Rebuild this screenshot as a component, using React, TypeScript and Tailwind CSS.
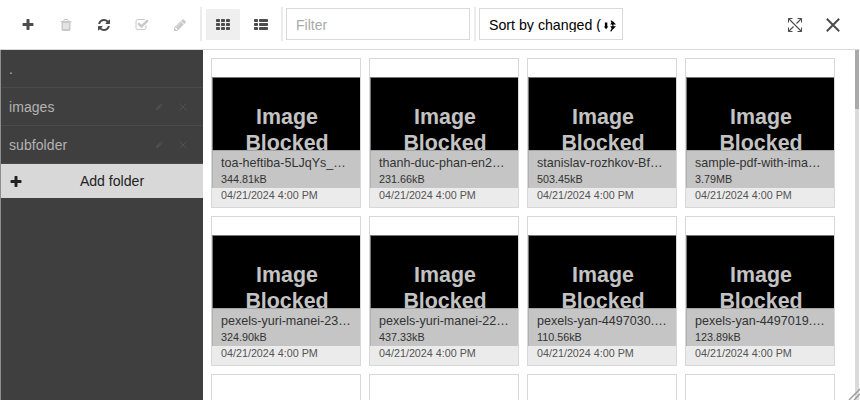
import React from 'react';

const PLUS =
  'M1600 736v192q0 40-28 68t-68 28h-416v416q0 40-28 68t-68 28h-192q-40 0-68-28t-28-68v-416h-416q-40 0-68-28t-28-68v-192q0-40 28-68t68-28h416v-416q0-40 28-68t68-28h192q40 0 68 28t28 68v416h416q40 0 68 28t28 68z';
const BIN =
  'M704 1376v-704q0-14-9-23t-23-9h-64q-14 0-23 9t-9 23v704q0 14 9 23t23 9h64q14 0 23-9t9-23zm256 0v-704q0-14-9-23t-23-9h-64q-14 0-23 9t-9 23v704q0 14 9 23t23 9h64q14 0 23-9t9-23zm256 0v-704q0-14-9-23t-23-9h-64q-14 0-23 9t-9 23v704q0 14 9 23t23 9h64q14 0 23-9t9-23zm-544-992h448l-48-117q-7-9-17-11h-317q-10 2-17 11zm928 32v64q0 14-9 23t-23 9h-96v948q0 83-47 143.5t-113 60.5h-832q-66 0-113-58.5t-47-141.5v-952h-96q-14 0-23-9t-9-23v-64q0-14 9-23t23-9h309l70-167q15-37 54-63t79-26h320q40 0 79 26t54 63l70 167h309q14 0 23 9t9 23z';
const REFRESH =
  'M1639 1056q0 5-1 7-64 268-268 434.5t-478 166.5q-146 0-282.5-55t-243.5-157l-129 129q-19 19-45 19t-45-19-19-45v-448q0-26 19-45t45-19h448q26 0 45 19t19 45-19 45l-137 137q71 66 161 102t187 36q134 0 250-65t186-179q11-17 53-117 8-23 30-23h192q13 0 22.5 9.5t9.5 22.5zm25-800v448q0 26-19 45t-45 19h-448q-26 0-45-19t-19-45 19-45l138-138q-148-137-349-137-134 0-250 65t-186 179q-11 17-53 117-8 23-30 23h-199q-13 0-22.5-9.5t-9.5-22.5v-7q65-268 270-434.5t480-166.5q146 0 284 55.5t245 156.5l130-129q19-19 45-19t45 19 19 45z';
const CHECK =
  'M1472 930v318q0 119-84.5 203.5t-203.5 84.5h-832q-119 0-203.5-84.5t-84.5-203.5v-832q0-119 84.5-203.5t203.5-84.5h832q63 0 117 25 15 7 18 23 3 17-9 29l-49 49q-10 10-23 10-3 0-9-2-23-6-45-6h-832q-66 0-113 47t-47 113v832q0 66 47 113t113 47h832q66 0 113-47t47-113v-254q0-13 9-22l64-64q10-10 23-10 6 0 12 3 20 8 20 29zm231-489l-814 814q-24 24-57 24t-57-24l-430-430q-24-24-24-57t24-57l110-110q24-24 57-24t57 24l263 263 647-647q24-24 57-24t57 24l110 110q24 24 24 57t-24 57z';
const PENCIL =
  'M491 1536l91-91-235-235-91 91v107h128v128h107zm523-928q0-22-22-22-10 0-17 7l-542 542q-7 7-7 17 0 22 22 22 10 0 17-7l542-542q7-7 7-17zm-54-192l416 416-832 832h-416v-416zm683 96q0 53-37 90l-166 166-416-416 166-165q36-38 90-38 53 0 91 38l235 234q37 39 37 91z';

function Glyph({ d, className = 'size-3.5' }: { d: string; className?: string }) {
  return (
    <svg viewBox="0 0 1792 1792" className={className} fill="currentColor">
      <path d={d} />
    </svg>
  );
}

function ToolButton({
  children,
  disabled = false,
  active = false,
  label,
}: {
  children: React.ReactNode;
  disabled?: boolean;
  active?: boolean;
  label: string;
}) {
  return (
    <button
      aria-label={label}
      className={`mt-px flex h-[31px] w-[34px] shrink-0 items-center justify-center rounded-[1px] pt-px ${
        disabled ? 'text-[#c9c9c9]' : 'text-[#4c4c4c]'
      } ${active ? 'bg-[#efefef]' : ''}`}
    >
      {children}
    </button>
  );
}

function Separator({ className }: { className: string }) {
  return <div className={`h-[34px] w-0.5 shrink-0 bg-[#ececec] ${className}`} />;
}

function TilesIcon({ list = false }: { list?: boolean }) {
  return (
    <svg width="14" height="12" viewBox="0 0 14 12" fill="currentColor">
      {[0, 4, 8].map((y) => (
        <g key={y}>
          <rect x="0" y={y} width="4" height="3" rx="0.8" />
          {list ? (
            <rect x="5" y={y} width="9" height="3" rx="0.8" />
          ) : (
            <>
              <rect x="5" y={y} width="4" height="3" rx="0.8" />
              <rect x="10" y={y} width="4" height="3" rx="0.8" />
            </>
          )}
        </g>
      ))}
    </svg>
  );
}

function Toolbar() {
  return (
    <header className="flex h-[50px] shrink-0 items-center border-b border-[#dadada] pb-px pl-[11px]">
      <div className="flex gap-1">
        <ToolButton label="Upload"><Glyph d={PLUS} /></ToolButton>
        <ToolButton label="Delete" disabled><Glyph d={BIN} /></ToolButton>
        <ToolButton label="Refresh"><Glyph d={REFRESH} /></ToolButton>
        <ToolButton label="Select" disabled><Glyph d={CHECK} /></ToolButton>
        <ToolButton label="Edit" disabled><Glyph d={PENCIL} /></ToolButton>
      </div>
      <Separator className="ml-[3px]" />
      <div className="ml-1 flex gap-1">
        <ToolButton label="Tiles" active><TilesIcon /></ToolButton>
        <ToolButton label="List"><TilesIcon list /></ToolButton>
      </div>
      <Separator className="ml-[3px]" />
      <input
        placeholder="Filter"
        className="ml-[3px] h-8 w-[184px] border border-[#dadada] px-[9px] pt-0.5 text-[14px] outline-none placeholder:text-[#a9a9a9]"
      />
      <Separator className="ml-1" />
      <div className="ml-[3px] flex h-8 w-36 items-center overflow-hidden border border-[#dadada] pl-[9px] text-[14.2px] text-black">
        <span className="h-4 shrink-0 overflow-hidden leading-[18px] whitespace-pre">Sort by changed (</span>
        <svg width="16" height="12" viewBox="0 0 16 12" className="mt-[3px] ml-0.5 shrink-0" fill="currentColor">
          <path d="M1.9 2.5h2.4v4h1L3.1 9.3.9 6.5h1z" />
          <path d="M7.2 4.6 9.7 1l3.3 3.6zM7.2 6.2H13l-3.4 3.6z" />
          <path d="M8 .6q4.2 5-.3 10.8" fill="none" stroke="currentColor" strokeWidth="1.2" />
        </svg>
      </div>
      <div className="ml-auto flex gap-1 pr-[10px]">
        <ToolButton label="Full size">
          <svg width="14" height="14" viewBox="0 0 14 14" fill="none" stroke="currentColor">
            <path d="M.5 4.5v-4h4M9.5.5h4v4M13.5 9.5v4h-4M4.5 13.5h-4v-4" />
            <path d="M.5.5l13 13M13.5.5l-5 5M5.5 8.5l-5 5" strokeWidth="1.2" />
          </svg>
        </ToolButton>
        <ToolButton label="Close">
          <svg width="14" height="14" viewBox="0 0 14 14" fill="none" stroke="currentColor" strokeWidth="2">
            <path d="M.8.8l12.4 12.4M13.2.8.8 13.2" />
          </svg>
        </ToolButton>
      </div>
    </header>
  );
}

function Folder({ name, editable = true }: { name: string; editable?: boolean }) {
  return (
    <div className="flex h-[38px] items-center border-b border-[#4b4b4b] pt-px pr-4 pl-2 text-[14px] tracking-[0.07px] text-[#b3b3b3]">
      <span className="flex-1">{name}</span>
      {editable && (
        <div className="flex items-center gap-4 text-[#4f4f4f]">
          <svg width="8" height="8" viewBox="0 0 8 8" fill="currentColor">
            <path d="M1 7V5.2L4.6 1.6 6.4 3.4 2.8 7zM5 1.2l1-.9 1.7 1.7-.9 1z" />
          </svg>
          <svg width="8" height="8" viewBox="0 0 8 8" fill="none" stroke="currentColor">
            <path d="M.3.3l7.4 7.4M7.7.3.3 7.7" />
          </svg>
        </div>
      )}
    </div>
  );
}

function Sidebar() {
  return (
    <aside className="w-[203px] shrink-0 border-l border-[#8d8d8d] bg-[#3f3f3f]">
      <Folder name="." editable={false} />
      <Folder name="images" />
      <Folder name="subfolder" />
      <button className="flex h-[34px] w-full items-center bg-[#d8d8d8] pl-2 text-[14.1px] text-[#222]">
        <Glyph d={PLUS} className="mt-px size-3.5" />
        <span className="flex-1 pt-px pr-0.5">Add folder</span>
      </button>
    </aside>
  );
}

const FILES = [
  ['toa-heftiba-5LJqYs_…', '344.81kB'],
  ['thanh-duc-phan-en2…', '231.66kB'],
  ['stanislav-rozhkov-Bf…', '503.45kB'],
  ['sample-pdf-with-ima…', '3.79MB'],
  ['pexels-yuri-manei-23…', '324.90kB'],
  ['pexels-yuri-manei-22…', '437.33kB'],
  ['pexels-yan-4497030.…', '110.56kB'],
  ['pexels-yan-4497019.…', '123.89kB'],
];

function FileCard({ name, size }: { name: string; size: string }) {
  return (
    <div className="flex h-[150px] flex-col border border-[#d8d8d8]">
      <div className="mt-[18px] h-[73px] shrink-0 overflow-hidden border-t border-l border-t-[#777] border-l-[#777] bg-black pt-[26px] pl-px text-center text-[21.4px] leading-[26px] font-bold text-[#c3c3c3]">
        Image
        <br />
        Blocked
      </div>
      <div className="h-[38px] border-t border-l border-t-[#a5a5a5] border-l-[#b0b0b0] bg-[#c5c5c5] pl-2 text-[#333]">
        <div className="pt-[5px] text-[12.55px] leading-[15px] whitespace-nowrap">{name}</div>
        <div className="pt-0.5 text-[10.8px] leading-3">{size}</div>
      </div>
      <div className="flex-1 bg-[#ebebeb] pt-px pl-[9px] text-[10.75px] leading-3 text-[#555]">04/21/2024 4:00 PM</div>
    </div>
  );
}

export default function App() {
  return (
    <div className="relative flex h-[400px] w-[860px] flex-col overflow-hidden bg-white font-['Liberation_Sans',Arial,sans-serif]">
      <Toolbar />
      <div className="flex min-h-0 flex-1">
        <Sidebar />
        <main className="grid flex-1 auto-rows-[150px] grid-cols-[repeat(4,150px)] gap-2 overflow-hidden p-2">
          {FILES.map(([name, size]) => (
            <FileCard key={name} name={name} size={size} />
          ))}
          {[0, 1, 2, 3].map((i) => (
            <div key={i} className="border border-[#d8d8d8]" />
          ))}
        </main>
        <div className="mr-px w-1 shrink-0 bg-[#dadada]">
          <div className="h-[59px] bg-[#a9a9a9]" />
        </div>
      </div>
      <svg className="absolute right-0 bottom-0" width="12" height="12" viewBox="0 0 12 12" stroke="#999" strokeWidth="1.4">
        <path d="M1 12 12 1M6 12l6-6" />
      </svg>
    </div>
  );
}
